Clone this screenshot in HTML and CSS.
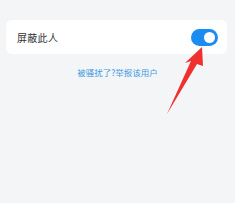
FILE: index.html
```html
<!DOCTYPE html>
<html lang="zh">
<head>
<meta charset="utf-8">
<link rel="stylesheet" href="styles.css">
</head>
<body>
<div class="page">
  <div class="card">
    <span class="label">屏蔽此人</span>
    <div class="toggle"><div class="knob"></div></div>
  </div>
  <div class="report">被骚扰了?举报该用户</div>
</div>
<svg class="arrow" width="235" height="203" viewBox="0 0 235 203">
  <polygon points="202,47 185,63 191,61 167,114 197,64 203,66" fill="#f0302f"/>
</svg>
</body>
</html>
```
FILE: styles.css
```css
html, body {
  margin: 0;
  padding: 0;
  background: #f4f5f7;
  font-family: "Noto Sans CJK SC", "Noto Sans", sans-serif;
}
.page {
  padding: 20px 8px 0 6px;
  display: flex;
  flex-direction: column;
}
.card {
  background: #ffffff;
  border-radius: 6px;
  height: 34px;
  display: flex;
  align-items: center;
  justify-content: space-between;
  padding: 0 9px 0 11px;
}
.label {
  font-size: 10px;
  color: #333333;
  letter-spacing: 0.3px;
}
.toggle {
  width: 27px;
  height: 17px;
  border-radius: 9px;
  background: #1b8cf0;
  display: flex;
  align-items: center;
  justify-content: flex-end;
  padding: 0 3px;
  box-sizing: border-box;
}
.knob {
  width: 11px;
  height: 11px;
  border-radius: 50%;
  background: #ffffff;
}
.report {
  margin-top: 12px;
  text-align: center;
  font-size: 8.5px;
  color: #3d9ae0;
  padding-left: 2px;
}
.arrow {
  position: absolute;
  left: 0;
  top: 0;
}
```
